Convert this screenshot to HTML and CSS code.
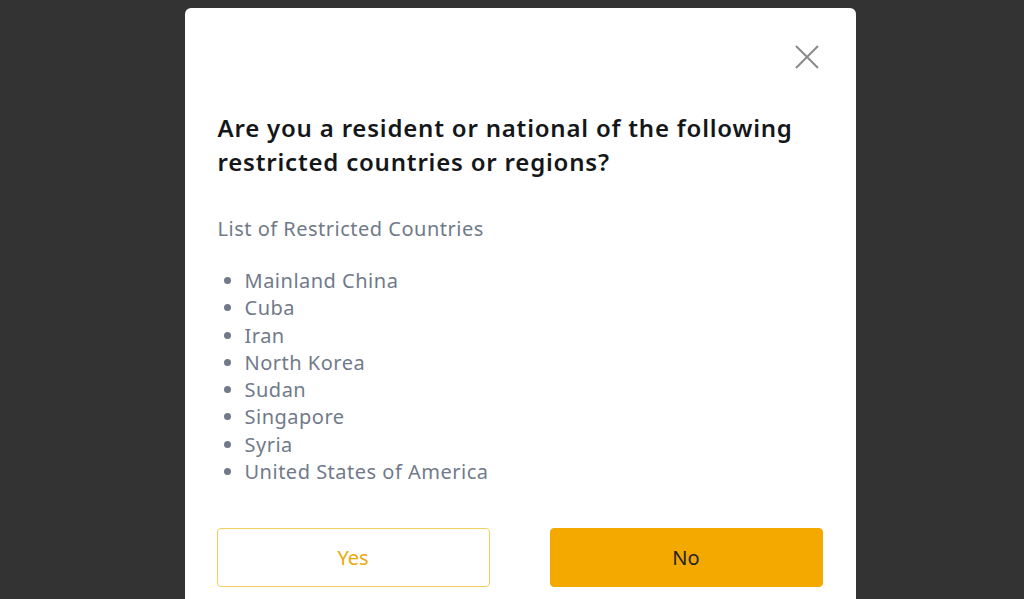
FILE: index.html
```html
<!DOCTYPE html>
<html lang="en">
<head>
<meta charset="utf-8">
<title>Restricted countries</title>
<link rel="stylesheet" href="styles.css">
</head>
<body>
<div class="overlay">
  <div class="modal">
    <div class="modal-head">
      <button class="close" aria-label="Close">
        <svg width="24" height="24" viewBox="0 0 24 24"><path d="M1 1L23 23M23 1L1 23" stroke="#8a8a8a" stroke-width="2" fill="none"/></svg>
      </button>
    </div>
    <h2 class="title">Are you a resident or national of the following<br>restricted countries or regions?</h2>
    <p class="label">List of Restricted Countries</p>
    <ul class="countries">
      <li>Mainland China</li>
      <li>Cuba</li>
      <li>Iran</li>
      <li>North Korea</li>
      <li>Sudan</li>
      <li>Singapore</li>
      <li>Syria</li>
      <li>United States of America</li>
    </ul>
    <div class="actions">
      <button class="btn btn-yes">Yes</button>
      <button class="btn btn-no">No</button>
    </div>
  </div>
</div>
</body>
</html>
```
FILE: styles.css
```css
* { box-sizing: border-box; }
html, body { margin: 0; padding: 0; height: 100%; }
body {
  background: #333333;
  font-family: "Noto Sans", "Open Sans", sans-serif;
  overflow: hidden;
}
.overlay {
  display: flex;
  justify-content: center;
  padding-top: 8px;
  padding-left: 16px;
}
.modal {
  width: 671px;
  background: #ffffff;
  border-radius: 6px;
  padding: 37px 33px 40px 32px;
}
.modal-head {
  display: flex;
  justify-content: flex-end;
  height: 24px;
  margin-right: 4px;
}
.close {
  border: 0;
  background: none;
  padding: 0;
  width: 24px;
  height: 24px;
  cursor: pointer;
}
.close svg { display: block; }
.title {
  margin: 42px 0 0 1px;
  font-size: 24px;
  line-height: 34px;
  font-weight: 600;
  color: #14171a;
  letter-spacing: 0.8px;
  white-space: nowrap;
}
.label {
  margin: 36px 0 0 1px;
  font-size: 20px;
  line-height: 28px;
  color: #707a8a;
  letter-spacing: 0.5px;
}
.countries {
  margin: 24px 0 0 1px;
  padding-left: 27px;
  font-size: 20px;
  line-height: 27.3px;
  color: #707a8a;
  letter-spacing: 0.5px;
}
.actions {
  display: flex;
  gap: 60px;
  margin-top: 43px;
}
.btn {
  flex: 1;
  height: 59px;
  border-radius: 4px;
  font-family: inherit;
  font-size: 20px;
  cursor: pointer;
}
.btn-yes {
  background: #ffffff;
  border: 1px solid #f0cf5e;
  color: #eaa90a;
}
.btn-no {
  background: #f3a900;
  border: 1px solid #f3a900;
  color: #1e2329;
}
```
